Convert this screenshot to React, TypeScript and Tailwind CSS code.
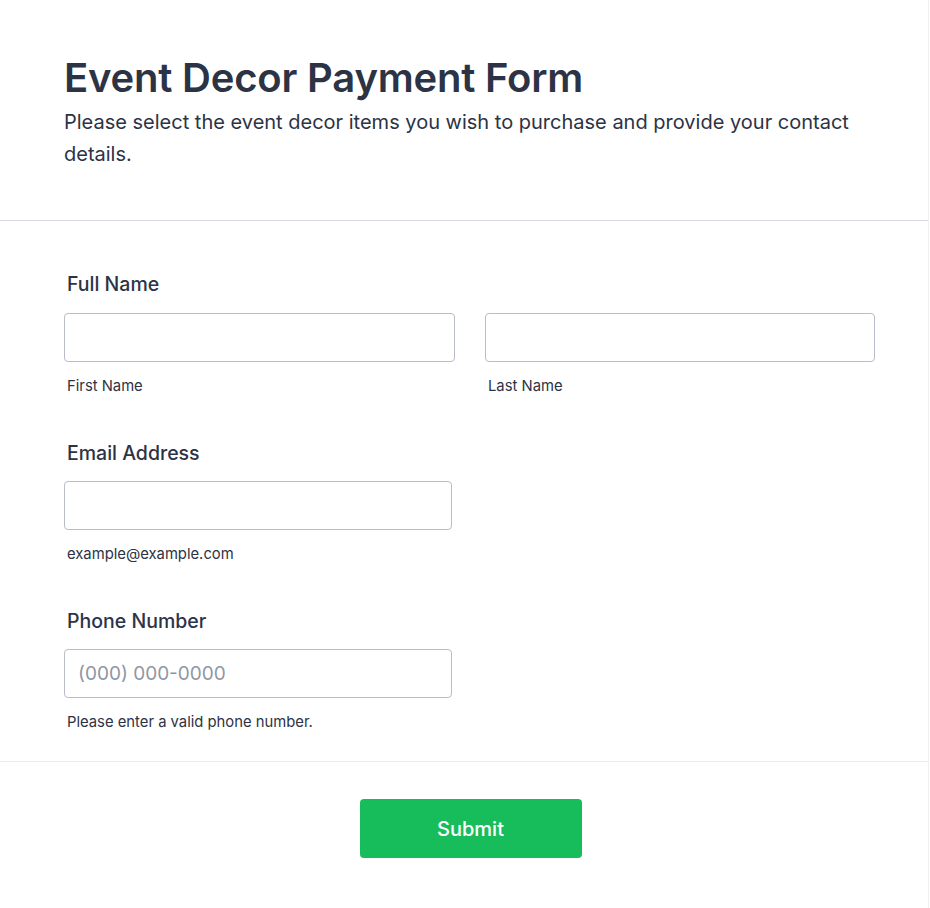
const font = { fontFamily: 'Inter, "Liberation Sans", sans-serif' };

function Field({
  hint,
  placeholder,
  width,
}: {
  hint: string;
  placeholder?: string;
  width: string;
}) {
  return (
    <div className={`${width} shrink-0`}>
      <input
        placeholder={placeholder}
        className="h-[49px] w-full rounded-[4px] border border-[#b8bdc9] bg-white px-[13px] text-[19px] text-[#2c3345] outline-none placeholder:text-[#8f96a3]"
      />
      <p className="mt-[14px] pl-[3px] text-[14.8px] leading-[20px] text-[#2c3345]">{hint}</p>
    </div>
  );
}

export default function App() {
  return (
    <div className="min-h-[908px] w-full bg-white text-[#2c3345]" style={font}>
      <div className="mr-[1px] min-h-[906px] border-r border-[#f1f1f4]">
        <header className="border-b border-[#d8d9e5] pb-[50px] pl-[64px] pr-[60px] pt-[54px]">
          <h1 className="text-[40px] font-semibold leading-[48px] tracking-[-0.2px]">Event Decor Payment Form</h1>
          <p className="mt-[4px] text-[20px] leading-[32px]">
            Please select the event decor items you wish to purchase and provide your contact details.
          </p>
        </header>

        <section className="border-b border-[#eaebf2] pb-[29px] pl-[64px] pr-[50px] pt-[51px]">
          <div>
            <label className="block pl-[3px] text-[19.5px] font-medium leading-[24px]">Full Name</label>
            <div className="mt-[17px] flex gap-[30px]">
              <Field hint="First Name" width="w-[391px]" />
              <Field hint="Last Name" width="w-[390px]" />
            </div>
          </div>

          <div className="mt-[45px]">
            <label className="block pl-[3px] text-[19.5px] font-medium leading-[24px]">Email Address</label>
            <div className="mt-[16px]">
              <Field hint="example@example.com" width="w-[388px]" />
            </div>
          </div>

          <div className="mt-[45px]">
            <label className="block pl-[3px] text-[19.5px] font-medium leading-[24px]">Phone Number</label>
            <div className="mt-[16px]">
              <Field hint="Please enter a valid phone number." placeholder="(000) 000-0000" width="w-[388px]" />
            </div>
          </div>
        </section>

        <footer className="flex justify-center pb-[50px] pt-[37px]">
          <button className="ml-[13px] h-[59px] w-[222px] rounded-[4px] bg-[#18bd5b] text-[20px] font-medium text-white">
            Submit
          </button>
        </footer>
      </div>
    </div>
  );
}
